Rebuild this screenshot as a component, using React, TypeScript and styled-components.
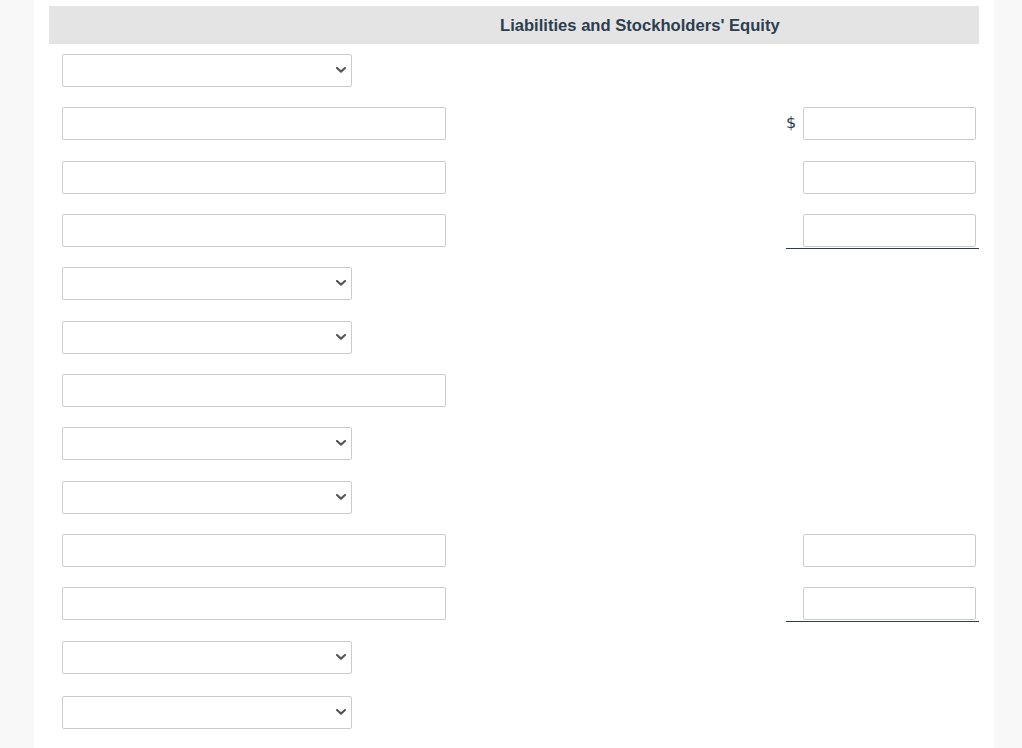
import React from "react";
import styled, { createGlobalStyle } from "styled-components";

const Global = createGlobalStyle`
  html, body { margin: 0; padding: 0; background: #f8f8f8; }
  body { font-family: "Liberation Sans", Arial, sans-serif; color: #2c3e50; }
`;

const Panel = styled.div`
  margin-left: 34px;
  width: 960px;
  min-height: 100vh;
  background: #ffffff;
  padding: 6px 15px 0;
  box-sizing: border-box;
`;

const Header = styled.div`
  height: 38px;
  background: #e4e4e4;
  display: flex;
  align-items: center;
  padding-left: 451px;
`;

const Title = styled.div`
  font-family: "Liberation Sans", Arial, sans-serif;
  font-weight: 700;
  font-size: 16.6px;
  color: #2c3e50;
  white-space: nowrap;
  margin-top: 2px;
`;

const Rows = styled.div`
  display: flex;
  flex-direction: column;
  padding-top: 10px;
`;

const Row = styled.div<{ $h: number }>`
  height: ${(p) => p.$h}px;
  display: flex;
  justify-content: space-between;
  align-items: flex-start;
  padding-left: 13px;
`;

const SelectWrap = styled.div`
  position: relative;
  width: 290px;
  height: 33px;
`;

const Select = styled.select`
  appearance: none;
  -webkit-appearance: none;
  width: 100%;
  height: 100%;
  box-sizing: border-box;
  border: 1px solid #cccccc;
  border-radius: 2px;
  background: #ffffff;
  margin: 0;
  outline: none;
`;

const Chevron = styled.svg`
  position: absolute;
  right: 6px;
  top: 13px;
  width: 10px;
  height: 6px;
  pointer-events: none;
`;

const TextInput = styled.input<{ $w: number }>`
  width: ${(p) => p.$w}px;
  height: 33px;
  box-sizing: border-box;
  border: 1px solid #cccccc;
  border-radius: 2px;
  background: #ffffff;
  margin: 0;
  padding: 0 6px;
  outline: none;
`;

const AmountCell = styled.div<{ $total: boolean }>`
  width: 193px;
  display: flex;
  align-items: center;
  padding-right: 3px;
  padding-bottom: 1px;
  box-sizing: border-box;
  border-bottom: 1px solid ${(p) => (p.$total ? "#2c3e50" : "transparent")};
`;

const Dollar = styled.span`
  font-family: "DejaVu Sans", Verdana, sans-serif;
  font-size: 16px;
  color: #2c3e50;
  width: 17px;
  text-align: left;
  margin-top: -2px;
`;

const AmountInput = styled(TextInput)`
  margin-left: auto;
`;

type RowDef = {
  kind: "select" | "input";
  amount?: "plain" | "dollar" | "total";
  h: number;
};

const P = 160 / 3;

const rows: RowDef[] = [
  { kind: "select", h: P },
  { kind: "input", amount: "dollar", h: P },
  { kind: "input", amount: "plain", h: P },
  { kind: "input", amount: "total", h: P },
  { kind: "select", h: P },
  { kind: "select", h: P },
  { kind: "input", h: P },
  { kind: "select", h: P },
  { kind: "select", h: P },
  { kind: "input", amount: "plain", h: P },
  { kind: "input", amount: "total", h: 53.7 },
  { kind: "select", h: 55 },
  { kind: "select", h: 52 },
];

function SelectBox() {
  return (
    <SelectWrap>
      <Select defaultValue="">
        <option value=""></option>
      </Select>
      <Chevron viewBox="0 0 10 6">
        <polyline
          points="1,1 5,4.6 9,1"
          fill="none"
          stroke="#555555"
          strokeWidth="2.1"
          strokeLinecap="round"
          strokeLinejoin="round"
        />
      </Chevron>
    </SelectWrap>
  );
}

export default function App() {
  return (
    <>
      <Global />
      <Panel>
        <Header>
          <Title>Liabilities and Stockholders' Equity</Title>
        </Header>
        <Rows>
          {rows.map((r, i) => (
            <Row key={i} $h={r.h}>
              {r.kind === "select" ? <SelectBox /> : <TextInput $w={384} />}
              {r.amount && (
                <AmountCell $total={r.amount === "total"}>
                  <Dollar>{r.amount === "dollar" ? "$" : ""}</Dollar>
                  <AmountInput $w={173} />
                </AmountCell>
              )}
            </Row>
          ))}
        </Rows>
      </Panel>
    </>
  );
}
